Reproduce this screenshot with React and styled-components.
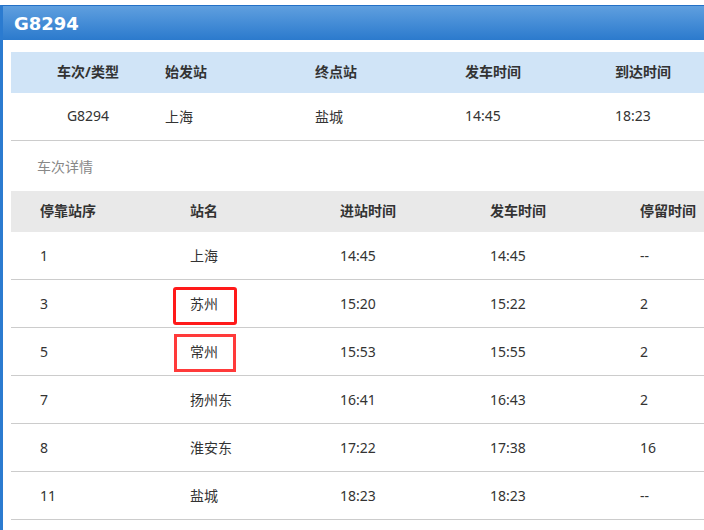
import React from 'react'
import styled, { createGlobalStyle } from 'styled-components'

const GlobalStyle = createGlobalStyle`
  html, body {
    margin: 0;
    padding: 0;
    background: #fff;
    overflow: hidden;
  }
  body {
    font-family: "Noto Sans", "Noto Sans CJK SC", sans-serif;
    font-size: 14px;
    color: #333;
  }
`

const Panel = styled.div`
  margin-top: 5px;
  min-height: 525px;
  overflow: hidden;
  border-left: 3px solid #2b7bd0;
  border-top: 1px solid #2370c6;
  box-sizing: border-box;
`

const TitleBar = styled.div`
  height: 34px;
  display: flex;
  align-items: center;
  padding-left: 11px;
  background: linear-gradient(to bottom, #5f9fdf, #2b7acd);
  color: #fff;
  font-family: "DejaVu Sans", sans-serif;
  font-weight: bold;
  font-size: 18px;
`

const Body = styled.div`
  padding: 12px 0 0 8px;
`

const Row = styled.div`
  display: grid;
  grid-template-columns: ${p => p.$first}px repeat(4, 150px);
  height: ${p => p.$height}px;
  align-items: center;
  background: ${p => p.$bg || 'transparent'};
  border-bottom: ${p => (p.$line ? '1px solid #cccccc' : 'none')};
  font-weight: ${p => (p.$head ? 'bold' : 'normal')};
`

const Cell = styled.div`
  position: relative;
  height: 100%;
  box-sizing: border-box;
  display: flex;
  align-items: center;
  justify-content: ${p => (p.$center ? 'center' : 'flex-start')};
  padding-left: ${p => p.$pad || 0}px;
  padding-bottom: ${p => p.$lift}px;
  white-space: nowrap;
`

const SectionTitle = styled.div`
  height: 50px;
  box-sizing: border-box;
  display: flex;
  align-items: center;
  padding: 0 0 1px 26px;
  color: #888;
`

const Mark = styled.span`
  position: absolute;
  left: ${p => p.$left}px;
  top: ${p => p.$top}px;
  width: ${p => p.$w}px;
  height: 38px;
  box-sizing: border-box;
  border: 3px solid ${p => p.$color};
  border-radius: ${p => p.$radius}px;
`

const summaryHead = ['车次/类型', '始发站', '终点站', '发车时间', '到达时间']
const summaryData = ['G8294', '上海', '盐城', '14:45', '18:23']

const stopHead = ['停靠站序', '站名', '进站时间', '发车时间', '停留时间']
const stops = [
  ['1', '上海', '14:45', '14:45', '--'],
  ['3', '苏州', '15:20', '15:22', '2'],
  ['5', '常州', '15:53', '15:55', '2'],
  ['7', '扬州东', '16:41', '16:43', '2'],
  ['8', '淮安东', '17:22', '17:38', '16'],
  ['11', '盐城', '18:23', '18:23', '--'],
]

// red highlight boxes drawn over two of the station names
const marks = {
  苏州: { left: 12, top: 7, w: 64, color: '#ff1a1a', radius: 3 },
  常州: { left: 13, top: 6, w: 62, color: '#ff3a3a', radius: 0 },
}

const SummaryRow = ({ cells, head }) => (
  <Row $first={154} $height={head ? 41 : 47} $bg={head ? '#d0e4f7' : ''} $head={head} $line={!head}>
    {cells.map((c, i) => (
      <Cell key={i} $center={i === 0} $lift={head ? 4 : 2}>{c}</Cell>
    ))}
  </Row>
)

const StopRow = ({ cells, head }) => (
  <Row $first={150} $height={head ? 41 : 47} $bg={head ? '#e9e9e9' : ''} $head={head} $line={!head}>
    {cells.map((c, i) => {
      const m = i === 1 && !head ? marks[c] : null
      return (
        <Cell key={i} $pad={29} $lift={head ? 4 : 1}>
          {c}
          {m && <Mark $left={m.left} $top={m.top} $w={m.w} $color={m.color} $radius={m.radius} />}
        </Cell>
      )
    })}
  </Row>
)

const App = () => {
  return (
    <>
      <GlobalStyle />
      <Panel>
        <TitleBar>G8294</TitleBar>
        <Body>
          <SummaryRow cells={summaryHead} head />
          <SummaryRow cells={summaryData} />
          <SectionTitle>车次详情</SectionTitle>
          <StopRow cells={stopHead} head />
          {stops.map(s => (
            <StopRow key={s[0]} cells={s} />
          ))}
        </Body>
      </Panel>
    </>
  )
}

export default App
